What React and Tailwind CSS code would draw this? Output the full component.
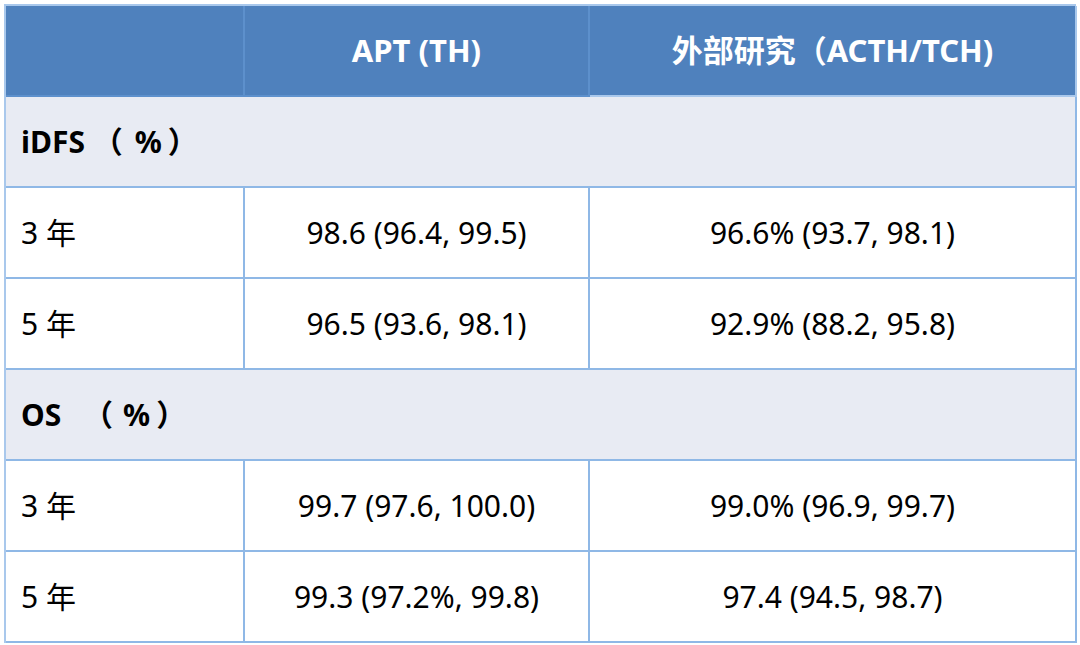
import React from "react";

const rows = [
  { band: "iDFS", gap: "ml-0", inner: "ml-[12px]" },
  { label: "3 年", apt: "98.6 (96.4, 99.5)", ext: "96.6% (93.7, 98.1)" },
  { label: "5 年", apt: "96.5 (93.6, 98.1)", ext: "92.9% (88.2, 95.8)" },
  { band: "OS", gap: "ml-[14px]", inner: "ml-[10px]" },
  { label: "3 年", apt: "99.7 (97.6, 100.0)", ext: "99.0% (96.9, 99.7)" },
  { label: "5 年", apt: "99.3 (97.2%, 99.8)", ext: "97.4 (94.5, 98.7)" },
];

function App() {
  return (
    <div
      className="w-[1080px] h-[645px] bg-white p-[4px] text-black"
      style={{ fontFamily: '"Noto Sans", "Noto Sans CJK SC", sans-serif' }}
    >
      <div className="grid grid-cols-[239px_345px_487px] grid-rows-[91px_91px_91px_91px_91px_91px_91px] border-l-2 border-t-2 border-[#a9c8ec]">
        {/* 表头 */}
        <div className="bg-[#4f81bd] border-r-2 border-b-2 border-[#5d90cc]"></div>
        <div className="bg-[#4f81bd] border-r-2 border-b-2 border-[#5d90cc] flex items-center justify-center text-white font-bold text-[31px]">
          APT (TH)
        </div>
        <div className="bg-[#4f81bd] border-r-2 border-b-2 border-[#a9c8ec] flex items-center justify-center text-white font-bold text-[31px]">
          外部研究（ACTH/TCH)
        </div>

        {rows.map((r, i) =>
          r.band ? (
            <div
              key={i}
              className="col-span-3 bg-[#e8ebf3] border-r-2 border-b-2 border-[#8fb8e6] flex items-center pl-[15px] font-bold text-[30px] whitespace-pre"
            >
              {r.band} <span className={r.gap}>（</span>
              <span className={r.inner}>%</span>
              <span className="ml-[6px]">）</span>
            </div>
          ) : (
            <React.Fragment key={i}>
              <div className="border-r-2 border-b-2 border-[#8fb8e6] flex items-center pl-[15px] text-[30px]">
                {r.label}
              </div>
              <div className="border-r-2 border-b-2 border-[#8fb8e6] flex items-center justify-center text-[30px]">
                {r.apt}
              </div>
              <div className="border-r-2 border-b-2 border-[#8fb8e6] flex items-center justify-center text-[30px]">
                {r.ext}
              </div>
            </React.Fragment>
          )
        )}
      </div>
    </div>
  );
}

export default App;
